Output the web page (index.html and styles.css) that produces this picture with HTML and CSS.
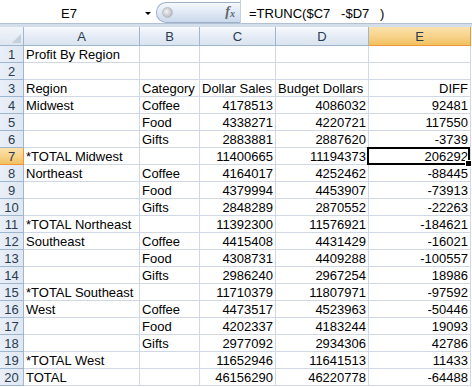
FILE: index.html
```html
<!DOCTYPE html>
<html>
<head>
<meta charset="utf-8">
<link rel="stylesheet" href="styles.css">
</head>
<body>
<div class="app">
  <div class="fbar">
    <div class="namebox"><span class="name">E7</span><span class="arrow"></span></div>
    <div class="pill"><span class="knob"></span><span class="fx">f<sub>x</sub></span></div>
    <div class="formula">=TRUNC($C7   -$D7   )</div>
  </div>
  <div class="band"></div>
  <div class="sheet">
    <div class="corner"><span class="tri"></span></div><div class="ch">A</div><div class="ch">B</div><div class="ch">C</div><div class="ch">D</div><div class="ch sel">E</div>

    <div class="rh">1</div><div class="c">Profit By Region</div><div class="c"></div><div class="c"></div><div class="c"></div><div class="c"></div>
    <div class="rh">2</div><div class="c"></div><div class="c"></div><div class="c"></div><div class="c"></div><div class="c"></div>
    <div class="rh">3</div><div class="c">Region</div><div class="c">Category</div><div class="c">Dollar Sales</div><div class="c">Budget Dollars</div><div class="c n">DIFF</div>
    <div class="rh">4</div><div class="c">Midwest</div><div class="c">Coffee</div><div class="c n">4178513</div><div class="c n">4086032</div><div class="c n">92481</div>
    <div class="rh">5</div><div class="c"></div><div class="c">Food</div><div class="c n">4338271</div><div class="c n">4220721</div><div class="c n">117550</div>
    <div class="rh">6</div><div class="c"></div><div class="c">Gifts</div><div class="c n">2883881</div><div class="c n">2887620</div><div class="c n">-3739</div>
    <div class="rh sel">7</div><div class="c">*TOTAL Midwest</div><div class="c"></div><div class="c n">11400665</div><div class="c n">11194373</div><div class="c n active">206292</div>
    <div class="rh">8</div><div class="c">Northeast</div><div class="c">Coffee</div><div class="c n">4164017</div><div class="c n">4252462</div><div class="c n">-88445</div>
    <div class="rh">9</div><div class="c"></div><div class="c">Food</div><div class="c n">4379994</div><div class="c n">4453907</div><div class="c n">-73913</div>
    <div class="rh">10</div><div class="c"></div><div class="c">Gifts</div><div class="c n">2848289</div><div class="c n">2870552</div><div class="c n">-22263</div>
    <div class="rh">11</div><div class="c">*TOTAL Northeast</div><div class="c"></div><div class="c n">11392300</div><div class="c n">11576921</div><div class="c n">-184621</div>
    <div class="rh">12</div><div class="c">Southeast</div><div class="c">Coffee</div><div class="c n">4415408</div><div class="c n">4431429</div><div class="c n">-16021</div>
    <div class="rh">13</div><div class="c"></div><div class="c">Food</div><div class="c n">4308731</div><div class="c n">4409288</div><div class="c n">-100557</div>
    <div class="rh">14</div><div class="c"></div><div class="c">Gifts</div><div class="c n">2986240</div><div class="c n">2967254</div><div class="c n">18986</div>
    <div class="rh">15</div><div class="c">*TOTAL Southeast</div><div class="c"></div><div class="c n">11710379</div><div class="c n">11807971</div><div class="c n">-97592</div>
    <div class="rh">16</div><div class="c">West</div><div class="c">Coffee</div><div class="c n">4473517</div><div class="c n">4523963</div><div class="c n">-50446</div>
    <div class="rh">17</div><div class="c"></div><div class="c">Food</div><div class="c n">4202337</div><div class="c n">4183244</div><div class="c n">19093</div>
    <div class="rh">18</div><div class="c"></div><div class="c">Gifts</div><div class="c n">2977092</div><div class="c n">2934306</div><div class="c n">42786</div>
    <div class="rh">19</div><div class="c">*TOTAL West</div><div class="c"></div><div class="c n">11652946</div><div class="c n">11641513</div><div class="c n">11433</div>
    <div class="rh">20</div><div class="c">TOTAL</div><div class="c"></div><div class="c n">46156290</div><div class="c n">46220778</div><div class="c n">-64488</div>
  </div>
</div>
</body>
</html>
```
FILE: styles.css
```css
* { box-sizing: border-box; }
html, body { margin: 0; padding: 0; background: #fff; }
body {
  font-family: "Liberation Sans", Arial, sans-serif;
  font-size: 13px;
  color: #000;
  width: 472px;
  height: 387px;
  overflow: hidden;
}
.app { width: 472px; }

.fbar {
  height: 24px;
  display: flex;
  align-items: center;
  background: #fff;
  border-bottom: 1px solid #b1c0d3;
}
.namebox {
  width: 156px;
  height: 24px;
  display: flex;
  align-items: center;
}
.name {
  width: 138px;
  text-align: center;
  padding-top: 4px;
  color: #000;
}
.arrow {
  width: 0;
  height: 0;
  border-left: 3px solid transparent;
  border-right: 3px solid transparent;
  border-top: 3px solid #000;
  margin-left: 7px;
  margin-top: 4px;
}
.pill {
  width: 84px;
  height: 21px;
  margin-top: 1px;
  border: 1px solid #9fb1c9;
  border-radius: 10px 0 0 10px;
  border-right: none;
  background: linear-gradient(#f5f8fc, #dde7f4 55%, #cbd9ec);
  display: flex;
  align-items: center;
  justify-content: space-between;
  padding: 0 5px 0 5px;
}
.knob {
  width: 11px;
  height: 11px;
  border-radius: 50%;
  background: radial-gradient(circle at 40% 40%, #f4f4f4, #c3c6ca 60%, #9fa4aa);
  border: 1px solid #b9c0c8;
}
.fx {
  font-family: "Liberation Serif", "Times New Roman", serif;
  font-style: italic;
  font-weight: bold;
  font-size: 14px;
  color: #5e6670;
  line-height: 1;
}
.fx sub { font-size: 10px; vertical-align: -1px; }
.formula {
  flex: 1;
  height: 24px;
  border-left: 1px solid #c5d0de;
  padding-left: 8px;
  padding-top: 4px;
  display: flex;
  align-items: center;
  white-space: pre;
}
.band {
  height: 3px;
  background: #d4deeb;
}

.sheet {
  display: grid;
  grid-template-columns: 24px 116px 60px 76px 93px 102px;
  grid-template-rows: 19px repeat(20, 17px);
}
.corner {
  background: linear-gradient(#f1f5fb, #dfe6f0);
  border-right: 1px solid #9eb6ce;
  border-bottom: 1px solid #9eb6ce;
  position: relative;
}
.tri {
  position: absolute;
  right: 2px;
  bottom: 2px;
  width: 0;
  height: 0;
  border-left: 9px solid transparent;
  border-bottom: 9px solid #c4cfdd;
}
.ch {
  background: linear-gradient(#f8fafd, #e5ecf6 50%, #dae3ef);
  border-right: 1px solid #9eb6ce;
  border-bottom: 1px solid #9eb6ce;
  text-align: center;
  line-height: 20px;
  color: #2a3b4f;
}
.ch.sel {
  background: linear-gradient(#fbe2ad, #f8d38c 50%, #f1c15f);
  border-right: 1px solid #f29536;
  border-bottom: 1px solid #f29536;
}
.rh {
  background: linear-gradient(90deg, #e9eff8, #dfe7f2);
  border-right: 1px solid #9eb6ce;
  border-bottom: 1px solid #9eb6ce;
  text-align: center;
  line-height: 16px;
  padding-top: 1px;
  color: #2a3b4f;
}
.rh.sel {
  background: linear-gradient(#fbe2ad, #f8d38c 50%, #f1c15f);
  border-right: 1px solid #f29536;
  border-bottom: 1px solid #f29536;
}
.c {
  border-right: 1px solid #d0d7e5;
  border-bottom: 1px solid #d0d7e5;
  line-height: 16px;
  padding: 1px 2px 0 2px;
  white-space: nowrap;
}
.n { text-align: right; }
.active { position: relative; }
.active::after {
  content: "";
  position: absolute;
  left: -2px;
  top: -1px;
  right: 0;
  bottom: -1px;
  border: 2px solid #000;
}
.active::before {
  content: "";
  position: absolute;
  right: -2px;
  bottom: -3px;
  width: 5px;
  height: 5px;
  background: #000;
  border: 1px solid #fff;
  z-index: 2;
}
```
